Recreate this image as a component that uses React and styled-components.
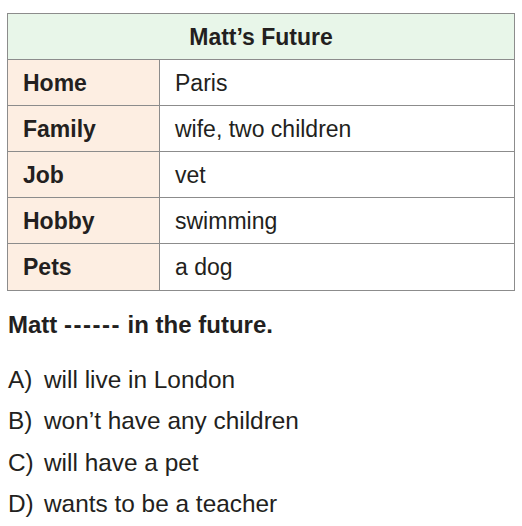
import React from 'react';
import styled, { createGlobalStyle } from 'styled-components';

const GlobalStyle = createGlobalStyle`
  body {
    margin: 0;
    background: #fff;
    font-family: "Liberation Sans", Arial, sans-serif;
    color: #231f20;
  }
`

const Page = styled.div`
  padding: 13px 7px 0 7px;
  width: 522px;
  box-sizing: border-box;
`

const Table = styled.div`
  width: 508px;
  border: 1px solid #8c8c8c;
  box-sizing: border-box;
`

const Caption = styled.div`
  height: 46px;
  padding-top: 2px;
  box-sizing: border-box;
  display: flex;
  align-items: center;
  justify-content: center;
  background: #e8f6e9;
  font-size: 23px;
  font-weight: bold;
  border-bottom: 1px solid #8c8c8c;
`

const Row = styled.div`
  display: grid;
  grid-template-columns: 152px 1fr;
  height: 46px;
  border-bottom: ${p => (p.$last ? 'none' : '1px solid #8c8c8c')};
  box-sizing: border-box;
`

const Cell = styled.div`
  display: flex;
  align-items: center;
  padding: 1px 15px 0 15px;
  font-size: 23px;
  font-weight: ${p => (p.$head ? 'bold' : 'normal')};
  background: ${p => (p.$head ? '#fdeee2' : '#fff')};
  border-right: ${p => (p.$head ? '1px solid #8c8c8c' : 'none')};
`

const Question = styled.p`
  margin: 20px 0 20px 1px;
  font-size: 24px;
  line-height: 28px;
  font-weight: bold;
`

const Blank = styled.span`
  letter-spacing: 1.5px;
`

const Options = styled.ol`
  list-style: none;
  margin: 0;
  padding: 0 0 0 1px;
`

const Option = styled.li`
  display: flex;
  font-size: 24.4px;
  line-height: 41.3px;
`

const Letter = styled.span`
  width: 36px;
  flex: none;
`

const rows = [
  ['Home', 'Paris'],
  ['Family', 'wife, two children'],
  ['Job', 'vet'],
  ['Hobby', 'swimming'],
  ['Pets', 'a dog'],
]

const choices = [
  ['A)', 'will live in London'],
  ['B)', 'won’t have any children'],
  ['C)', 'will have a pet'],
  ['D)', 'wants to be a teacher'],
]

const App = () => {
  return (
    <Page>
      <GlobalStyle />
      <Table>
        <Caption>Matt’s Future</Caption>
        {rows.map(([k, v], i) => (
          <Row key={k} $last={i === rows.length - 1}>
            <Cell $head>{k}</Cell>
            <Cell>{v}</Cell>
          </Row>
        ))}
      </Table>
      <Question>Matt <Blank>------</Blank> in the future.</Question>
      <Options>
        {choices.map(([l, t]) => (
          <Option key={l}>
            <Letter>{l}</Letter>
            {t}
          </Option>
        ))}
      </Options>
    </Page>
  );
}

export default App
